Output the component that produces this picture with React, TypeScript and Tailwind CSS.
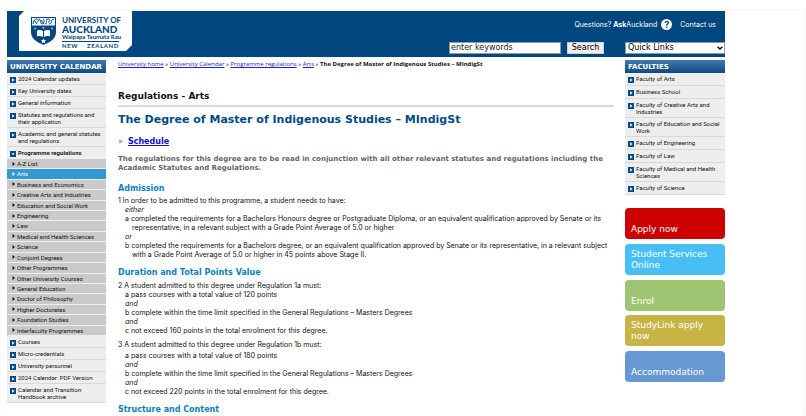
import React from "react";

type NavItem = { label: string; lines?: 1 | 2 };

const calendarTop: NavItem[] = [
  { label: "2024 Calendar updates" },
  { label: "Key University dates" },
  { label: "General information" },
  { label: "Statutes and regulations and their application", lines: 2 },
  { label: "Academic and general statutes and regulations", lines: 2 },
];

const programmes = [
  "A-Z List",
  "Arts",
  "Business and Economics",
  "Creative Arts and Industries",
  "Education and Social Work",
  "Engineering",
  "Law",
  "Medical and Health Sciences",
  "Science",
  "Conjoint Degrees",
  "Other Programmes",
  "Other University Courses",
  "General Education",
  "Doctor of Philosophy",
  "Higher Doctorates",
  "Foundation Studies",
  "Interfaculty Programmes",
];

const calendarBottom: NavItem[] = [
  { label: "Courses" },
  { label: "Micro-credentials" },
  { label: "University personnel" },
  { label: "2024 Calendar: PDF Version" },
  { label: "Calendar and Transition Handbook archive", lines: 2 },
];

const faculties: NavItem[] = [
  { label: "Faculty of Arts" },
  { label: "Business School" },
  { label: "Faculty of Creative Arts and Industries", lines: 2 },
  { label: "Faculty of Education and Social Work", lines: 2 },
  { label: "Faculty of Engineering" },
  { label: "Faculty of Law" },
  { label: "Faculty of Medical and Health Sciences", lines: 2 },
  { label: "Faculty of Science" },
];

const actions = [
  { label: "Apply now", color: "bg-[#cc0000]" },
  { label: "Student Services Online", color: "bg-[#47bff6]" },
  { label: "Enrol", color: "bg-[#9fc572]" },
  { label: "StudyLink apply now", color: "bg-[#c8b444]" },
  { label: "Accommodation", color: "bg-[#6699cf]" },
];

function Marker({ open = false }: { open?: boolean }) {
  return (
    <svg viewBox="0 0 6 6" className="mt-[2px] size-[6px] shrink-0" aria-hidden="true">
      <rect width="6" height="6" fill="#004b87" />
      {open ? (
        <path d="M1.5 2.3h3L3 4.2z" fill="#fff" />
      ) : (
        <path d="M2.1 1.3 4.5 3 2.1 4.7z" fill="#fff" />
      )}
    </svg>
  );
}

function NavRow({ item, tall = false }: { item: NavItem; tall?: boolean }) {
  const height = item.lines === 2 ? "h-[19px]" : tall ? "h-[13px]" : "h-[12px]";
  return (
    <li className={`${height} border-b border-[#d9d9d9] bg-[#eeeeee]`}>
      <a
        href="#"
        className={`${tall ? "pr-[4px]" : ""} flex gap-[2px] pt-[2px] pl-[3px] font-['Roboto',sans-serif] text-[6px] leading-[7px] text-[#111]`}
      >
        <Marker />
        <span>{item.label}</span>
      </a>
    </li>
  );
}

function PanelTitle({ children }: { children: React.ReactNode }) {
  return (
    <h2 className="h-[13px] bg-linear-to-b from-[#4079ad] to-[#0d4b84] pl-[3px] text-[7px] leading-[14px] font-bold text-white">
      {children}
    </h2>
  );
}

function Crest() {
  return (
    <svg viewBox="0 0 25 28" className="mt-px h-[28px] w-[25px]" aria-hidden="true">
      <path d="M0 0h25v15c0 7-6 10-12.500 13C6 25 0 22 0 15z" fill="#00467f" />
      <path d="M1 1h23v7.500H1z" fill="#fff" />
      <g fill="none" stroke="#00467f" strokeWidth="1">
        <path d="M2 7c0-3 2-5 4-5s2 3 0 3M8 2c2 0 1 5 3 5s3-5 1-5M14 7c3 0 0-5 3-5s2 3 0 3M18 7c4 0 1-5 5-5M3 3l3 4M10 3l3 4" />
      </g>
      <path d="M6 13.500c2.500-.8 4.500-.5 6 .5v6c-1.500-1-3.500-1.300-6-.6zM19 13.500c-2.500-.8-4.500-.5-6 .5v6c1.500-1 3.500-1.300 6-.6z" fill="#fff" />
      <path d="m12.500 21.500.8 1.600 1.800.2-1.300 1.200.4 1.800-1.700-.9-1.700.9.4-1.800-1.300-1.200 1.800-.2z" fill="#fff" />
      <path d="m4 10 .4.900.9.100-.7.600.2.900-.8-.4-.8.400.2-.9-.7-.6.900-.1zM21 10l.4.900.9.100-.7.600.2.900-.8-.4-.8.400.2-.9-.7-.6.900-.1zM12.500 9.500l.4.900.9.100-.7.600.2.900-.8-.4-.8.400.2-.9-.7-.6.900-.1z" fill="#cfe0ee" />
    </svg>
  );
}

function Logo() {
  return (
    <a
      href="#"
      aria-label="University of Auckland home"
      className="ml-[12px] flex h-[40px] w-[113px] gap-[6px] bg-white pt-[5px] pl-[12px] text-[#00467f] [clip-path:polygon(5px_0,100%_0,100%_34px,107px_100%,0_100%,0_5px)]"
    >
      <Crest />
      <span className="flex w-[57px] flex-col font-['Lato','Open_Sans',sans-serif] font-bold whitespace-nowrap">
        <span className="text-[8px] leading-[8px]">UNIVERSITY OF</span>
        <span className="text-[10px] leading-[10px] font-black">AUCKLAND</span>
        <span className="text-[6px] leading-[6px]">Waipapa Taumata Rau</span>
        <span className="mt-px flex justify-between border-t border-[#00467f] pt-px text-[6px] leading-[5px] tracking-widest">
          <span>NEW</span>
          <span>ZEALAND</span>
        </span>
      </span>
    </a>
  );
}

function Header() {
  return (
    <header className="flex h-[46px] justify-between bg-[#00467f]">
      <Logo />
      <div className="flex flex-col items-end justify-between pt-[8px] pb-[3px]">
        <nav className="flex items-center pr-[9px] font-['Inter',sans-serif] text-[7px] leading-[11px] text-white">
          <a href="#" className="flex items-center gap-[4px]">
            <span>
              Questions? <b>Ask</b>Auckland
            </span>
            <span className="grid size-[11px] place-items-center rounded-full bg-white text-[9px] font-bold text-[#00467f]">?</span>
          </a>
          <a href="#" className="ml-[8px]">Contact us</a>
        </nav>
        <form className="flex h-[12px] text-[8px]" onSubmit={(e) => e.preventDefault()}>
          <input
            type="text"
            aria-label="Search keywords"
            defaultValue="enter keywords"
            className="w-[112px] border border-[#8a9bab] bg-white px-px text-[8px] text-[#222]"
          />
          <button type="submit" className="ml-[6px] w-[37px] border border-[#d0d0d0] bg-[#efefef] text-[8px] leading-[10px] text-black">
            Search
          </button>
          <span className="relative ml-[21px] w-[100px]">
            <select aria-label="Quick Links" className="block h-full w-full appearance-none border border-[#8a9bab] bg-white pl-[2px] text-[8px] leading-[10px] text-black">
              <option>Quick Links</option>
            </select>
            <svg viewBox="0 0 6 4" className="pointer-events-none absolute top-[4px] right-[2px] h-[4px] w-[6px]" aria-hidden="true">
              <path d="m.6.700 2.400 2.300L5.400.7" fill="none" stroke="#000" strokeWidth="1.300" />
            </svg>
          </span>
        </form>
      </div>
    </header>
  );
}

function CalendarNav() {
  return (
    <nav aria-label="University Calendar" className="w-[99px] shrink-0">
      <PanelTitle>UNIVERSITY CALENDAR</PanelTitle>
      <ul>
        {calendarTop.map((item) => (
          <NavRow key={item.label} item={item} />
        ))}
        <li>
          <a href="#" className="flex h-[12px] gap-[2px] bg-[#eeeeee] pt-[2px] pl-[3px] font-['Roboto',sans-serif] text-[6px] leading-[7px] font-bold text-[#222]">
            <Marker open />
            <span>Programme regulations</span>
          </a>
          <ul className="grid h-[177px] auto-rows-fr">
            {programmes.map((name) => (
              <li
                key={name}
                className={
                  name === "Arts"
                    ? "border-b border-[#eeeeee] bg-[#3399d3] text-white"
                    : "border-b border-[#eeeeee] bg-[#cacaca] text-[#111]"
                }
              >
                <a href="#" className="flex items-center gap-[2px] pl-[5px] font-['Roboto',sans-serif] text-[6px] leading-[9px]">
                  <svg viewBox="0 0 3 4" className="h-[4px] w-[3px]" aria-hidden="true">
                    <path d="M.5 0 3 2 .5 4z" fill="currentColor" />
                  </svg>
                  {name}
                </a>
              </li>
            ))}
          </ul>
        </li>
        {calendarBottom.map((item) => (
          <NavRow key={item.label} item={item} />
        ))}
      </ul>
    </nav>
  );
}

function Breadcrumbs() {
  const links = ["University home", "University Calendar", "Programme regulations", "Arts"];
  return (
    <nav aria-label="Breadcrumb" className="font-['Open_Sans',sans-serif] text-[6px] leading-[9px] whitespace-nowrap">
      {links.map((label) => (
        <React.Fragment key={label}>
          <a href="#" className="text-[#2222bb] underline">{label}</a>
          <span> » </span>
        </React.Fragment>
      ))}
      <b>The Degree of Master of Indigenous Studies – MIndigSt</b>
    </nav>
  );
}

function SectionTitle({ children }: { children: React.ReactNode }) {
  return (
    <h3 className="font-['DejaVu_Sans',Verdana,sans-serif] text-[8px] leading-[10px] font-bold text-[#0a82ba]">
      {children}
    </h3>
  );
}

function Clause({ children }: { children: React.ReactNode }) {
  return <p className="pl-[14px] -indent-[7px]">{children}</p>;
}

function Joiner({ children }: { children: React.ReactNode }) {
  return <p className="pl-[7px] italic">{children}</p>;
}

function Regulations() {
  return (
    <main className="min-w-0 flex-1">
      <Breadcrumbs />
      <p className="mt-[21px] text-[9px] leading-[12px] font-bold text-[#111]">Regulations - Arts</p>
      <hr className="mt-[3px] border-t-2 border-[#dadada]" />
      <h1 className="mt-[6px] text-[11px] leading-[14px] font-bold text-[#004b87]">
        The Degree of Master of Indigenous Studies – MIndigSt
      </h1>
      <p className="mt-[10px] text-[8px] leading-[10px] font-bold text-[#0a82ba]">
        <span className="mr-[5px] font-normal">»</span>
        <a href="#" className="text-[#1111cc] underline">Schedule</a>
      </p>
      <p className="mt-[8px] text-[7px] leading-[9px] font-bold text-[#666]">
        The regulations for this degree are to be read in conjunction with all other relevant statutes and regulations including the Academic Statutes and Regulations.
      </p>

      <section className="mt-[11px] font-['Inter',sans-serif] text-[7px] leading-[9px] text-[#111]">
        <SectionTitle>Admission</SectionTitle>
        <p className="mt-[2px]">1 In order to be admitted to this programme, a student needs to have:</p>
        <Joiner>either</Joiner>
        <Clause>
          a completed the requirements for a Bachelors Honours degree or Postgraduate Diploma, or an equivalent qualification approved by Senate or its representative, in a relevant subject with a Grade Point Average of 5.0 or higher
        </Clause>
        <Joiner>or</Joiner>
        <Clause>
          b completed the requirements for a Bachelors degree, or an equivalent qualification approved by Senate or its representative, in a relevant subject with a Grade Point Average of 5.0 or higher in 45 points above Stage II.
        </Clause>
      </section>

      <section className="mt-[9px] font-['Inter',sans-serif] text-[7px] leading-[9px] text-[#111]">
        <SectionTitle>Duration and Total Points Value</SectionTitle>
        <p className="mt-[3px]">2 A student admitted to this degree under Regulation 1a must:</p>
        <Clause>a pass courses with a total value of 120 points</Clause>
        <Joiner>and</Joiner>
        <Clause>b complete within the time limit specified in the General Regulations – Masters Degrees</Clause>
        <Joiner>and</Joiner>
        <Clause>c not exceed 160 points in the total enrolment for this degree.</Clause>
        <p className="mt-[5px] mb-[2px]">3 A student admitted to this degree under Regulation 1b must:</p>
        <Clause>a pass courses with a total value of 180 points</Clause>
        <Joiner>and</Joiner>
        <Clause>b complete within the time limit specified in the General Regulations – Masters Degrees</Clause>
        <Joiner>and</Joiner>
        <Clause>c not exceed 220 points in the total enrolment for this degree.</Clause>
      </section>

      <section className="mt-[9px]">
        <SectionTitle>Structure and Content</SectionTitle>
      </section>
    </main>
  );
}

function Sidebar() {
  return (
    <aside className="w-[100px] shrink-0">
      <nav aria-label="Faculties">
        <PanelTitle>FACULTIES</PanelTitle>
        <ul>
          {faculties.map((item) => (
            <NavRow key={item.label} item={item} tall />
          ))}
        </ul>
      </nav>
      <div className="mt-[13px] flex h-[174px] flex-col justify-between">
        {actions.map(({ label, color }) => (
          <a
            key={label}
            href="#"
            className={`${color} flex h-[31px] items-end rounded-[4px] px-[6px] pb-[4px] text-[9px] leading-[11px] text-white`}
          >
            {label}
          </a>
        ))}
      </div>
    </aside>
  );
}

export default function App() {
  return (
    <div className="overflow-hidden bg-white pt-[9px] font-['DejaVu_Sans',Verdana,sans-serif] text-[#111]">
      <div className="border-t-2 border-r-3 border-l border-[#fafafa] pr-[78px] pl-[6px]">
        <Header />
        <div className="mt-[3px] flex">
          <CalendarNav />
          <div className="flex min-w-0 flex-1 pr-[11px] pl-[12px]">
            <Regulations />
          </div>
          <Sidebar />
        </div>
      </div>
    </div>
  );
}
